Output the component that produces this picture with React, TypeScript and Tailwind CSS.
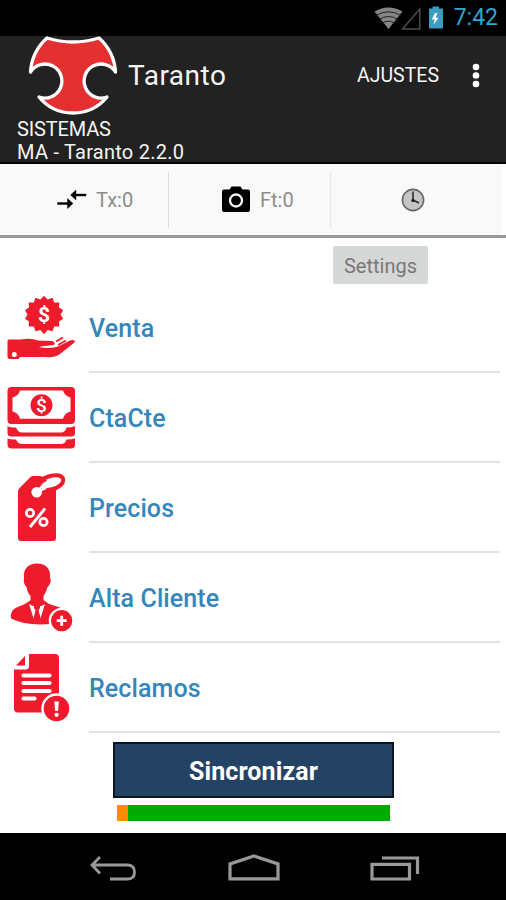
import type { ReactNode } from "react";

type MenuItem = {
  label: string;
  icon: ReactNode;
};

function StatusBar() {
  return (
    <div className="flex h-9 items-center justify-end bg-black pr-[8px] text-[#33a5d0]">
      <svg width="74" height="36" viewBox="374 0 74 36" fill="none">
        <path d="M376.5 11.5Q390.500 3.500 404.500 11.500L390.500 29Z" fill="#858585" />
        <path d="M378 15.500Q390.500 8 403 15.500M381 19.500Q390.500 13.500 400 19.500M384 23.300Q390.500 19 397 23.300" stroke="#222" strokeWidth="1" />
        <path d="M404.500 29L421.800 9V29Z" stroke="#4c4c4c" strokeWidth="1.500" />
        <path d="M431 8.500h3.500V6.500h6.500v2h4V28.500H431Z" fill="#3b9cc0" />
        <path d="M437 13l-3.200 6.500h3l-1.300 5.200 5-7h-2.700l1.500-4.700Z" fill="#fff" />
      </svg>
      <span className="ml-[8px] text-[23px] leading-9">7:42</span>
    </div>
  );
}

function Logo() {
  return (
    <svg width="90" height="80" viewBox="28 36 90 80">
      <path
        d="M47 38Q73 46 99 38C108 46 114.500 57 115.500 72A17 17 0 1 0 107 97C98 108 86 113 73 113C60 113 48 108 39 97A17 17 0 1 0 30.500 72C31.500 57 38 46 47 38Z"
        fill="#e53032"
        stroke="#fff"
        strokeWidth="3.300"
        strokeLinejoin="round"
      />
    </svg>
  );
}

function Header() {
  return (
    <header className="h-32 border-b-2 border-[#050505] bg-[#222] text-[#f5f5f5]">
      <div className="flex h-20 items-center pl-7">
        <Logo />
        <h1 className="ml-[10px] text-[28px] leading-8 tracking-[0.5px]">Taranto</h1>
        <button className="ml-auto text-[19.500px] leading-8">AJUSTES</button>
        <svg className="mr-[23px] ml-[30px]" width="14" height="28" viewBox="0 0 14 28" fill="#fff">
          <circle cx="7" cy="5" r="3.300" />
          <circle cx="7" cy="13.500" r="3.300" />
          <circle cx="7" cy="22" r="3.300" />
        </svg>
      </div>
      <div className="pt-[2px] pl-[17px] text-[20px] leading-[23px]">
        <p className="tracking-[-0.15px]">SISTEMAS</p>
        <p className="tracking-[0.25px]">MA - Taranto 2.2.0</p>
      </div>
    </header>
  );
}

function Counters() {
  return (
    <div className="h-[74px] border-b-[3px] border-[#999] bg-white text-[20px] text-[#8c8c8c]">
      <div className="mr-1 flex h-[71px] items-center bg-[#f9f9f9]">
        <div className="flex h-14 w-[169px] items-center border-r border-[#ddd] pl-[57px]">
          <svg width="30" height="22" viewBox="0 0 30 22">
            <path d="M0.500 13.500H10.500V9.500L16 14.500L10.500 19.500V15.500H0.500Z" stroke="#000" strokeWidth="0.400" />
            <path d="M29 5H19V1L13.500 6L19 11V7H29Z" stroke="#000" strokeWidth="0.400" />
          </svg>
          <span className="ml-[9px]">Tx:0</span>
        </div>
        <div className="flex h-14 w-[162px] items-center border-r border-[#e8e8e8] pl-[53px]">
          <svg width="28" height="28" viewBox="0 0 28 28">
            <path d="M9.500 0.500H18.500L20.500 3.500H26Q28 3.500 28 5.500V24Q28 26 26 26H2Q0 26 0 24V5.500Q0 3.500 2 3.500H7.500Z" fill="#000" />
            <circle cx="14" cy="14.500" r="6" fill="none" stroke="#f9f9f9" strokeWidth="2.300" />
          </svg>
          <span className="ml-[10px]">Ft:0</span>
        </div>
        <div className="flex flex-1 justify-center pr-2">
          <svg width="24" height="24" viewBox="0 0 24 24" fill="none">
            <circle cx="12" cy="12" r="10.600" fill="#c5c5c5" stroke="#666" strokeWidth="1.600" />
            <path d="M12 3.500V12L18 15" stroke="#2b2b2b" strokeWidth="1.600" />
            <circle cx="12" cy="12.500" r="1.700" fill="#222" />
          </svg>
        </div>
      </div>
    </div>
  );
}

function SaleIcon() {
  return (
    <>
      <path d="M44 10.700L47.600 14.500L52.500 12.800L54.200 17.600L59.300 17.500L59 22.500L63.200 25.200L60.500 29.500L63.200 33.800L59 36.500L59.300 41.500L54.200 41.500L52.500 46.300L47.600 45L44 49.300L40.400 45L35.500 46.300L33.800 41.500L28.700 41.500L29 36.500L25 33.800L27.500 29.500L25 25.200L29 22.500L28.700 17.500L33.800 17.600L35.500 12.800L40.400 14.500Z" />
      <text x="44" y="37" textAnchor="middle" fill="#fff" fontSize="21" fontWeight="700">$</text>
      <path d="M9 54.500H20Q31 52.500 38 55.500L52 56Q56 57.500 54 60L42 61.300L39 62.300Q52 64 58 61.500L70 55.500Q74.500 54 75 57L60 69Q54 73 46 72H20L18.500 74H9.500Q7.500 74 7.500 72V56.500Q7.500 54.500 9 54.500Z" />
      <path d="M56 56.500L63 52.500M58 60L66 55.500" fill="none" stroke="#ee1b2d" strokeWidth="1.800" />
      <circle cx="14.300" cy="69.500" r="2.500" fill="#fff" />
    </>
  );
}

function AccountIcon() {
  return (
    <>
      <path
        fillRule="evenodd"
        d="M11.500 12H71Q75 12 75 16V45Q75 49 71 49H11.500Q7.500 49 7.500 45V16Q7.500 12 11.500 12ZM20 15.500Q18.500 21 12.500 22.500V36.500Q18.500 38 20 43.700H63Q64.500 38 70.500 36.500V22.500Q64.500 21 63 15.500Z"
      />
      <circle cx="41.500" cy="30.300" r="11" />
      <text x="41.500" y="37" textAnchor="middle" fill="#fff" fontSize="19" fontWeight="500">$</text>
      <path d="M7.500 51Q10 52.500 16 52.500Q18 57.500 22 57.500H61Q65 57.500 66.500 52.500Q72 52.500 75 51V58Q75 61.500 71 61.500H11.500Q7.500 61.500 7.500 58Z" />
      <path d="M7.500 63.500Q10 64.500 16 64.500Q18 69 22 69H61Q65 69 66.500 64.500Q72 64.500 75 63.500V69.500Q75 73.500 71 73.500H11.500Q7.500 73.500 7.500 69.500Z" />
    </>
  );
}

function PriceIcon() {
  return (
    <>
      <path d="M33 11H40Q42 11 43.500 12.500L55 23.500Q56 24.500 56 26.500V73Q56 76 53 76H21Q18 76 18 73V27Q18 24.500 20 22.500L30 12.500Q31 11 33 11Z" />
      <path d="M36.500 27.500L46 23Q54 22.500 62 14.500L50 15.500L44 18.500Z" fill="#fff" stroke="#fff" strokeWidth="2" />
      <path d="M40.500 15.500Q50 9.500 59 10.500Q65 12 62.500 18Q58 24 47.500 25" fill="none" stroke="#ee1b2d" strokeWidth="4" strokeLinecap="round" />
      <circle cx="36.700" cy="27.300" r="5.300" fill="#fff" />
      <path d="M45 43.500L30 62" stroke="#fff" strokeWidth="2.900" />
      <circle cx="30" cy="48" r="3.700" fill="none" stroke="#fff" strokeWidth="2.700" />
      <circle cx="43.500" cy="57" r="3.700" fill="none" stroke="#fff" strokeWidth="2.700" />
    </>
  );
}

function ClientIcon() {
  return (
    <>
      <path d="M37 8.500C46 8.500 51 14 50 23Q51.500 25 50 28.500Q49 31 47.500 32Q46 38 43.500 41V48L37 55L30.500 48V41Q27.500 38 26.500 32Q23 29 24 23C23 14 28 8.500 37 8.500Z" />
      <path d="M31 45L37 50L43.500 45L49 49L60 52.500L64 56Q53 57 50 69Q26 71 11 63.500Q10 59 13 55Q15 52.500 24 49.500Z" />
      <path d="M29 49L35 68L37 62L39 68L45 49L41.500 51H33Z" fill="#fff" />
      <path d="M34 49.500H40V53L38.500 55L41 64.500L38.500 69H35.500L33.300 64.500L35.500 55L34 53Z" />
      <circle cx="61.700" cy="65.700" r="11.800" stroke="#fff" strokeWidth="2.400" />
      <path d="M56.700 65.700H66.700M61.700 60.700V70.700" stroke="#fff" strokeWidth="2.800" />
    </>
  );
}

function ClaimIcon() {
  return (
    <>
      <path d="M29 9H55Q59 9 59 13V65H44L43 67.500H18Q14 67.500 14 63.500V24.500H25.500Q29 24.500 29 21Z" />
      <path d="M16 20.500L25 11V20.500Z" />
      <path d="M23.500 30.500H49.500M23.500 38H49.500M23.500 46H49.500M23.500 53.500H34.500" fill="none" stroke="#fff" strokeWidth="4.200" strokeLinecap="round" />
      <circle cx="56.500" cy="63.500" r="14" stroke="#fff" strokeWidth="2.400" />
      <path d="M54.300 56.500H58.900L58 66H55.200Z" fill="#fff" />
      <circle cx="56.600" cy="69.800" r="2.100" fill="#fff" />
    </>
  );
}

const menuItems: MenuItem[] = [
  { label: "Venta", icon: <SaleIcon /> },
  { label: "CtaCte", icon: <AccountIcon /> },
  { label: "Precios", icon: <PriceIcon /> },
  { label: "Alta Cliente", icon: <ClientIcon /> },
  { label: "Reclamos", icon: <ClaimIcon /> },
];

function MenuRow({ label, icon }: MenuItem) {
  return (
    <li className="flex h-[90px] pr-[6px]">
      <svg width="89" height="90" viewBox="0 -2 89 90" fill="#ee1b2d">
        {icon}
      </svg>
      <button className="flex flex-1 items-center border-b-2 border-[#e2e2e2] pt-[4px] text-left text-[25px] font-medium tracking-[0.1px] text-[#3486bd]">
        {label}
      </button>
    </li>
  );
}

function NavBar() {
  return (
    <nav className="flex h-[67px] items-center justify-between bg-black pr-[86px] pl-[88px] pt-[2px]">
      <svg width="50" height="32" viewBox="0 0 50 32" fill="none" stroke="#999" strokeWidth="2.800">
        <path d="M12 5L4 13L12 21.500M4 13H40Q46.500 13.500 46.500 20Q46.500 27 40 27H22" />
      </svg>
      <svg width="54" height="32" viewBox="0 0 54 32" fill="none" stroke="#999" strokeWidth="3.200">
        <path d="M3 26.800V12L27 4L51 12V26.800Z" />
      </svg>
      <svg width="50" height="32" viewBox="0 0 50 32" fill="none" stroke="#999" strokeWidth="3.200">
        <path d="M2 12.300H39.500V27H2ZM12 6H47.500V22" />
      </svg>
    </nav>
  );
}

export default function App() {
  return (
    <div className="flex h-[900px] w-[506px] flex-col overflow-hidden bg-white font-['Roboto',sans-serif]">
      <StatusBar />
      <Header />
      <Counters />
      <main className="flex-1">
        <div className="flex h-[45px] pt-2 pl-[333px]">
          <button className="h-[38px] w-[95px] rounded-[2px] bg-[#d6d7d7] pt-[2px] text-[20px] text-[#777]">Settings</button>
        </div>
        <ul>
          {menuItems.map((item) => (
            <MenuRow key={item.label} {...item} />
          ))}
        </ul>
        <div className="flex flex-col pt-[9px] pl-[113px]">
          <button className="h-14 w-[281px] border-2 border-[#0d1520] bg-[#244263] pt-[3px] text-[25px] font-bold tracking-[0.1px] text-white">
            Sincronizar
          </button>
          <div className="mt-[7px] ml-1 flex h-4 w-[273px] bg-[#00a900]">
            <div className="w-[11px] bg-[#ff8c00]" />
          </div>
        </div>
      </main>
      <NavBar />
    </div>
  );
}
